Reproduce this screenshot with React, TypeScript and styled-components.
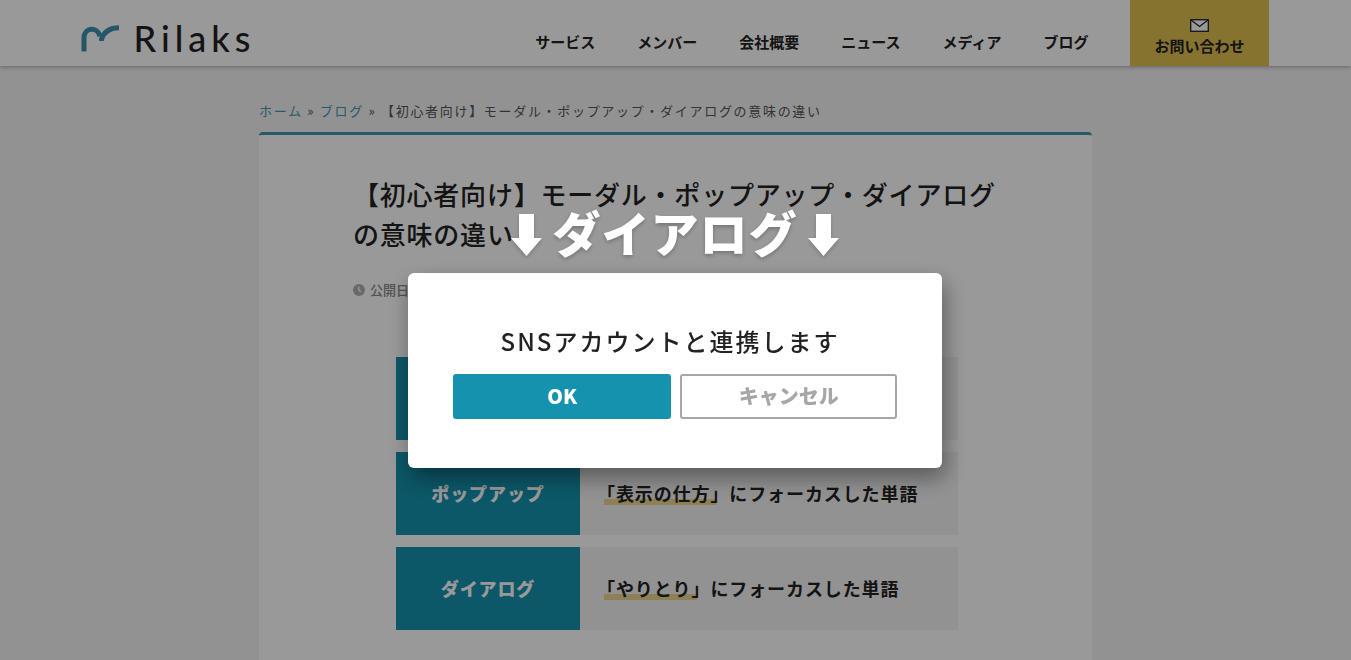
import React from "react";
import styled, { createGlobalStyle } from "styled-components";

const teal = "#1492ae";
const softTeal = "#4495b0";

const GlobalStyle = createGlobalStyle`
  *, *::before, *::after { box-sizing: border-box; }
  body {
    margin: 0;
    color: #222;
    background: #f3f3f3;
    font-family: "Noto Sans CJK JP", "Noto Sans", sans-serif;
  }
  h1, h2, p { margin: 0; }
`;

const Page = styled.div`
  display: flex;
  flex-direction: column;
  min-height: 100vh;
`;

const Header = styled.header`
  background: #fff;
  box-shadow: 0 1px 4px rgba(0, 0, 0, 0.3);
`;

const HeaderInner = styled.div`
  display: flex;
  align-items: stretch;
  justify-content: space-between;
  height: 66px;
  max-width: 1190px;
  margin: 0 auto;
  padding-right: 2px;
`;

const Logo = styled.a`
  display: flex;
  align-items: center;
  gap: 15px;
  padding-top: 10px;
  color: #222;
  font: 500 36px/40px Lato, sans-serif;
  letter-spacing: 5px;
  text-decoration: none;
`;

const Nav = styled.nav`
  display: flex;
  gap: 42px;
`;

const NavLink = styled.a`
  padding-top: 31px;
  color: #222;
  font-size: 15px;
  font-weight: 700;
  line-height: 22px;
  text-decoration: none;
  white-space: nowrap;
`;

const ContactLink = styled.a`
  display: flex;
  flex-direction: column;
  align-items: center;
  gap: 3px;
  padding: 19px 24px 0;
  background: #dfc050;
  color: #222;
  font-size: 15px;
  font-weight: 700;
  line-height: 22px;
  text-decoration: none;
  white-space: nowrap;
`;

const Main = styled.main`
  display: flex;
  flex: 1;
  flex-direction: column;
  width: 100%;
  max-width: 833px;
  margin: 0 auto;
`;

const Breadcrumb = styled.nav`
  padding: 34px 0 10px;
  color: #555;
  font-size: 13px;
  letter-spacing: 0.13em;
  line-height: 22px;

  a {
    color: ${softTeal};
    text-decoration: none;
  }
`;

const Article = styled.article`
  flex: 1;
  padding: 39px 94px 16px;
  background: #fff;
  border-top: 3px solid ${softTeal};
  border-radius: 4px 4px 0 0;
`;

const Title = styled.h1`
  font-size: 26px;
  font-weight: 500;
  letter-spacing: 0.03em;
  line-height: 40px;
`;

const Meta = styled.p`
  display: flex;
  align-items: center;
  gap: 5px;
  padding: 25px 0 44px;
  color: #888;
  font-size: 13px;
  font-weight: 500;
  line-height: 22px;
`;

const TermTable = styled.table`
  width: 562px;
  max-width: 100%;
  margin-left: 43px;
  border-collapse: separate;
  border-spacing: 0 12px;
  font-size: 18px;
  letter-spacing: 0.05em;
`;

const Term = styled.th`
  width: 184px;
  height: 83px;
  padding: 0 0 2px;
  background: ${teal};
  color: #fff;
  font-weight: 900;
`;

const Meaning = styled.td`
  padding: 0 0 2px 17px;
  background: #f4f4f4;
  font-weight: 700;
`;

const Marked = styled.span`
  background: linear-gradient(#ebd68a, #ebd68a) 7px 95% / calc(100% - 20px) 6px no-repeat;
`;

const Overlay = styled.div`
  position: fixed;
  inset: 0;
  display: flex;
  flex-direction: column;
  align-items: center;
  padding: 200px 17px 0 16px;
  background: rgba(0, 0, 0, 0.4);
`;

const Caption = styled.p`
  display: flex;
  align-items: center;
  gap: 10px;
  height: 73px;
  padding-bottom: 3px;
  color: #fff;
  font-size: 48px;
  font-weight: 900;
  letter-spacing: 1px;
  line-height: 60px;
  text-shadow: 0 2px 4px rgba(0, 0, 0, 0.25);

  svg { filter: drop-shadow(0 2px 2px rgba(0, 0, 0, 0.2)); }
`;

const CaptionText = styled.span`
  padding-bottom: 8px;
`;

const Dialog = styled.section`
  width: 100%;
  max-width: 534px;
  padding: 49px 45px;
  background: #fff;
  border-radius: 6px;
  box-shadow: 3px 10px 22px rgba(0, 0, 0, 0.4);
`;

const DialogTitle = styled.h2`
  padding-right: 10px;
  font-size: 24px;
  font-weight: 500;
  letter-spacing: 2px;
  line-height: 38px;
  text-align: center;
`;

const Actions = styled.div`
  display: flex;
  gap: 9px;
  margin-top: 14px;
`;

const Button = styled.button<{ $primary?: boolean }>`
  flex: 1;
  height: 45px;
  padding: 0 0 1px 1px;
  border: 2px solid ${(p) => (p.$primary ? teal : "#a6a6a6")};
  border-radius: 3px;
  background: ${(p) => (p.$primary ? teal : "#fff")};
  color: ${(p) => (p.$primary ? "#fff" : "#a6a6a6")};
  font-family: inherit;
  font-size: 20px;
  font-weight: 900;
  line-height: 30px;
`;

const LogoMark = () => (
  <svg width="38" height="27" viewBox="0 0 38 27" fill="none" stroke="#3e91ae" strokeWidth="5" aria-hidden="true">
    <path d="M3 26.500V13C3 2 16.500 1 19 11.500" />
    <path d="M20.500 16V14C23 7 28 2.700 38 2.700" />
  </svg>
);

const Envelope = () => (
  <svg width="19" height="13" viewBox="0 0 19 13" fill="#fff" stroke="#222" strokeWidth="1.300" aria-hidden="true">
    <rect x="0.700" y="0.700" width="17.600" height="11.600" />
    <path d="M1 1L9.500 7.500L18 1" fill="none" />
  </svg>
);

const Clock = () => (
  <svg width="12" height="12" viewBox="0 0 12 12" fill="none" aria-hidden="true">
    <circle cx="6" cy="6" r="6" fill="#b0b0b0" />
    <path d="M5.800 2.500V6.300L8 7.800" stroke="#fff" strokeWidth="1.300" />
  </svg>
);

const DownArrow = () => (
  <svg width="31" height="42" viewBox="0 0 31 42" fill="#fff" aria-hidden="true">
    <path d="M8 0H23V24H31L15.500 42L0 24H8Z" />
  </svg>
);

const navItems = ["サービス", "メンバー", "会社概要", "ニュース", "メディア", "ブログ"];

const terms = [
  { term: "", marked: "", rest: "" },
  { term: "ポップアップ", marked: "「表示の仕方」", rest: "にフォーカスした単語" },
  { term: "ダイアログ", marked: "「やりとり」", rest: "にフォーカスした単語" },
];

export default function App() {
  return (
    <>
      <GlobalStyle />
      <Page>
        <Header>
          <HeaderInner>
            <Logo href="#">
              <LogoMark />
              Rilaks
            </Logo>
            <Nav>
              {navItems.map((item) => (
                <NavLink href="#" key={item}>{item}</NavLink>
              ))}
              <ContactLink href="#">
                <Envelope />
                お問い合わせ
              </ContactLink>
            </Nav>
          </HeaderInner>
        </Header>
        <Main>
          <Breadcrumb>
            <a href="#">ホーム</a> » <a href="#">ブログ</a> » 【初心者向け】モーダル・ポップアップ・ダイアログの意味の違い
          </Breadcrumb>
          <Article>
            <Title>【初心者向け】モーダル・ポップアップ・ダイアログの意味の違い</Title>
            <Meta>
              <Clock />
              公開日
            </Meta>
            <TermTable>
              <tbody>
                {terms.map((t, i) => (
                  <tr key={i}>
                    <Term scope="row">{t.term}</Term>
                    <Meaning>
                      {t.marked && <Marked>{t.marked}</Marked>}
                      {t.rest}
                    </Meaning>
                  </tr>
                ))}
              </tbody>
            </TermTable>
          </Article>
        </Main>
      </Page>
      <Overlay>
        <Caption>
          <DownArrow />
          <CaptionText>ダイアログ</CaptionText>
          <DownArrow />
        </Caption>
        <Dialog role="dialog" aria-modal="true" aria-labelledby="dialog-title">
          <DialogTitle id="dialog-title">SNSアカウントと連携します</DialogTitle>
          <Actions>
            <Button type="button" $primary>OK</Button>
            <Button type="button">キャンセル</Button>
          </Actions>
        </Dialog>
      </Overlay>
    </>
  );
}
